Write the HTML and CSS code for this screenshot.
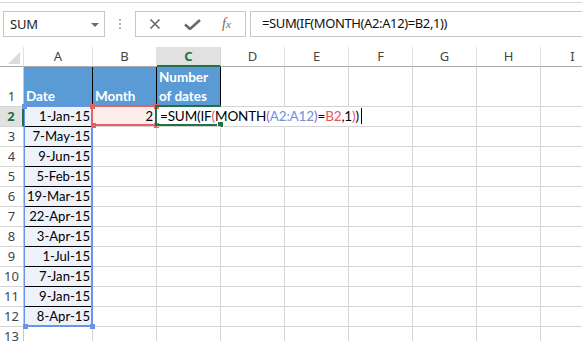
FILE: index.html
```html
<!DOCTYPE html>
<html>
<head>
<meta charset="utf-8">
<link rel="stylesheet" href="styles.css">
</head>
<body>
<div class="app">
  <div class="topline"></div>
  <div class="fbar">
    <div class="namebox"><span class="nb-text">SUM</span><span class="nb-arrow"></span></div>
    <div class="grip"><i></i><i></i><i></i></div>
    <div class="btns">
      <svg class="ico" width="12" height="10" viewBox="0 0 12 10"><path d="M1.5 0.5 L10.5 9.5 M10.5 0.5 L1.5 9.5" stroke="#6a6a6a" stroke-width="1.6" fill="none"/></svg>
      <svg class="ico" width="17" height="11" viewBox="0 0 17 11"><path d="M1 5.5 L6 10 L16 1" stroke="#6a6a6a" stroke-width="2.6" fill="none"/></svg>
      <span class="fx">f<sub>x</sub></span>
    </div>
    <div class="finput">=SUM(IF(MONTH(A2:A12)=B2,1))</div>
  </div>
  <div class="sheet">
    <div class="c corner"><span class="tri"></span></div>
    <div class="c ch">A</div>
    <div class="c ch">B</div>
    <div class="c ch sel">C</div>
    <div class="c ch">D</div>
    <div class="c ch">E</div>
    <div class="c ch">F</div>
    <div class="c ch">G</div>
    <div class="c ch">H</div>
    <div class="c ch">I</div>

    <div class="c rh">1</div>
    <div class="c hd">Date</div>
    <div class="c hd">Month</div>
    <div class="c hd">Number<br>of dates</div>
    <div class="c"></div><div class="c"></div><div class="c"></div><div class="c"></div><div class="c"></div><div class="c"></div>

    <div class="c rh rsel">2</div>
    <div class="c da">1-Jan-15</div>
    <div class="c num">2</div>
    <div class="c edit"><span class="ftext">=SUM(IF<span class="p1">(</span>MONTH<span class="p2">(</span><span class="rA">A2:A12</span><span class="p2">)</span>=<span class="rB">B2</span>,1<span class="p1">)</span>)</span><span class="caret"></span></div>
    <div class="c nor"></div><div class="c nor"></div><div class="c"></div><div class="c"></div><div class="c"></div><div class="c"></div>

    <div class="c rh">3</div><div class="c da">7-May-15</div><div class="c"></div><div class="c"></div><div class="c"></div><div class="c"></div><div class="c"></div><div class="c"></div><div class="c"></div><div class="c"></div>
    <div class="c rh">4</div><div class="c da">9-Jun-15</div><div class="c"></div><div class="c"></div><div class="c"></div><div class="c"></div><div class="c"></div><div class="c"></div><div class="c"></div><div class="c"></div>
    <div class="c rh">5</div><div class="c da">5-Feb-15</div><div class="c"></div><div class="c"></div><div class="c"></div><div class="c"></div><div class="c"></div><div class="c"></div><div class="c"></div><div class="c"></div>
    <div class="c rh">6</div><div class="c da">19-Mar-15</div><div class="c"></div><div class="c"></div><div class="c"></div><div class="c"></div><div class="c"></div><div class="c"></div><div class="c"></div><div class="c"></div>
    <div class="c rh">7</div><div class="c da">22-Apr-15</div><div class="c"></div><div class="c"></div><div class="c"></div><div class="c"></div><div class="c"></div><div class="c"></div><div class="c"></div><div class="c"></div>
    <div class="c rh">8</div><div class="c da">3-Apr-15</div><div class="c"></div><div class="c"></div><div class="c"></div><div class="c"></div><div class="c"></div><div class="c"></div><div class="c"></div><div class="c"></div>
    <div class="c rh">9</div><div class="c da">1-Jul-15</div><div class="c"></div><div class="c"></div><div class="c"></div><div class="c"></div><div class="c"></div><div class="c"></div><div class="c"></div><div class="c"></div>
    <div class="c rh">10</div><div class="c da">7-Jan-15</div><div class="c"></div><div class="c"></div><div class="c"></div><div class="c"></div><div class="c"></div><div class="c"></div><div class="c"></div><div class="c"></div>
    <div class="c rh">11</div><div class="c da">9-Jan-15</div><div class="c"></div><div class="c"></div><div class="c"></div><div class="c"></div><div class="c"></div><div class="c"></div><div class="c"></div><div class="c"></div>
    <div class="c rh">12</div><div class="c da last">8-Apr-15</div><div class="c"></div><div class="c"></div><div class="c"></div><div class="c"></div><div class="c"></div><div class="c"></div><div class="c"></div><div class="c"></div>
    <div class="c rh">13</div><div class="c"></div><div class="c"></div><div class="c"></div><div class="c"></div><div class="c"></div><div class="c"></div><div class="c"></div><div class="c"></div><div class="c"></div>

    <div class="hl hl-a"><i class="h tl"></i><i class="h tr"></i><i class="h bl"></i><i class="h br"></i></div>
    <div class="hl hl-b"><i class="h tl"></i><i class="h tr"></i><i class="h bl"></i><i class="h br"></i></div>
    <div class="hl hl-c"><i class="fill"></i></div>
  </div>
</div>
</body>
</html>
```

FILE: styles.css
```css
* { box-sizing: border-box; }
html, body { margin: 0; padding: 0; background: #fff; }
body { width: 582px; height: 341px; overflow: hidden; }
.app { width: 582px; height: 341px; overflow: hidden; }

.topline { height: 3px; border-top: 1px solid #fff; border-bottom: 1px solid #d4d4d4; }

.fbar { display: flex; align-items: center; height: 26px; margin-top: 8px; padding-left: 3px; }
.namebox { width: 102px; height: 26px; border: 1px solid #c6c6c6; display: flex; align-items: center; justify-content: space-between; padding: 0 5px 0 6px; }
.nb-text { font-family: "Noto Sans", sans-serif; font-size: 13px; color: #222; letter-spacing: -0.2px; }
.nb-arrow { width: 0; height: 0; border-left: 4px solid transparent; border-right: 4px solid transparent; border-top: 4px solid #6d6d6d; margin-top: 1px; }
.grip { width: 30px; display: flex; flex-direction: column; align-items: center; gap: 2px; }
.grip i { width: 2px; height: 2px; background: #b4b4b4; display: block; }
.btns { width: 111px; height: 26px; border: 1px solid #c6c6c6; display: flex; align-items: center; padding-left: 13px; gap: 0; }
.btns .ico { display: block; }
.btns .ico:first-child { margin-right: 23px; }
.btns .ico:nth-child(2) { margin-right: 21px; margin-top: 1px; }
.fx { font-family: "Liberation Serif", serif; font-style: italic; font-size: 14px; color: #6a6a6a; line-height: 1; }
.fx sub { font-size: 11px; vertical-align: baseline; position: relative; top: 0; }
.finput { margin-left: 4px; flex: 1; height: 26px; border: 1px solid #c6c6c6; border-right: none; font-family: "Noto Sans", sans-serif; font-size: 13px; letter-spacing: -0.38px; color: #111; padding-left: 11px; line-height: 23px; white-space: nowrap; }

.sheet { margin-top: 10px; position: relative; display: grid; grid-template-columns: 24px 69px repeat(8, 64px); grid-template-rows: 20px 40px repeat(12, 20px); width: 605px; }
.c { border-right: 1px solid #d4d4d4; border-bottom: 1px solid #d4d4d4; font-family: Lato, sans-serif; font-size: 13.1px; color: #000; white-space: nowrap; overflow: visible; }
.ch { font-family: "Noto Sans", sans-serif; font-size: 13px; color: #444; text-align: center; line-height: 19px; border-right-color: #e1e1e1; border-bottom-color: #ababab; }
.ch.sel { background: #e1e1e1; color: #217346; font-weight: bold; border-bottom: 2px solid #217346; border-right-color: #d4d4d4; line-height: 19px; }
.corner { border-bottom-color: #ababab; border-right-color: #e1e1e1; position: relative; }
.tri { position: absolute; right: 3px; bottom: 2px; width: 0; height: 0; border-left: 12px solid transparent; border-bottom: 12px solid #dcdcdc; }
.rh { font-family: "Noto Sans", sans-serif; font-size: 13px; color: #444; text-align: center; display: flex; align-items: flex-end; justify-content: center; line-height: 19px; border-right-color: #c8c8c8; }
.rh.rsel { background: #e1e1e1; color: #217346; font-weight: bold; border-right: 2px solid #217346; }
.hd { background: #5b9bd5; color: #fff; font-weight: bold; font-size: 13.5px; border-right-color: #000; display: flex; align-items: flex-end; padding-left: 2px; line-height: 19px; }
.da { background: #edf2fb; text-align: right; padding-right: 2px; line-height: 19px; border-bottom-color: #000; }
.da.last { border-bottom-color: #d4d4d4; }
.num { background: #fdeeee; text-align: right; padding-right: 3px; line-height: 19px; }
.edit { border-right-color: transparent; padding-left: 3px; line-height: 19px; position: relative; z-index: 4; font-size: 13.5px; letter-spacing: -0.15px; }
.nor { border-right-color: transparent; }
.p1 { color: #d9567e; }
.p2 { color: #9a61c9; }
.rA { color: #6d8fe4; }
.rB { color: #e0585c; }
.caret { display: inline-block; width: 1px; height: 16px; background: #000; vertical-align: -3px; margin-left: 2px; }

.hl { position: absolute; pointer-events: none; z-index: 2; }
.hl-a { left: 24px; top: 59px; width: 69px; height: 221px; border: 2px solid #6b93e8; border-left-width: 1px; border-top-width: 1px; }
.hl-b { left: 91px; top: 58px; width: 66px; height: 21px; border: 2px solid #e36464; }
.hl-c { left: 155px; top: 58px; width: 66px; height: 21px; border: 2px solid #217346; border-right: none; z-index: 3; }
.h { position: absolute; width: 5px; height: 5px; display: block; }
.hl-a .h { background: #6b93e8; }
.hl-b .h { background: #e36464; }
.tl { left: -3px; top: -3px; }
.tr { right: -4px; top: -3px; }
.bl { left: -2px; bottom: -4px; }
.br { right: -4px; bottom: -4px; }
.fill { position: absolute; right: -3px; bottom: -4px; width: 5px; height: 5px; background: #217346; border: 1px solid #fff; box-sizing: content-box; display: block; }
```
